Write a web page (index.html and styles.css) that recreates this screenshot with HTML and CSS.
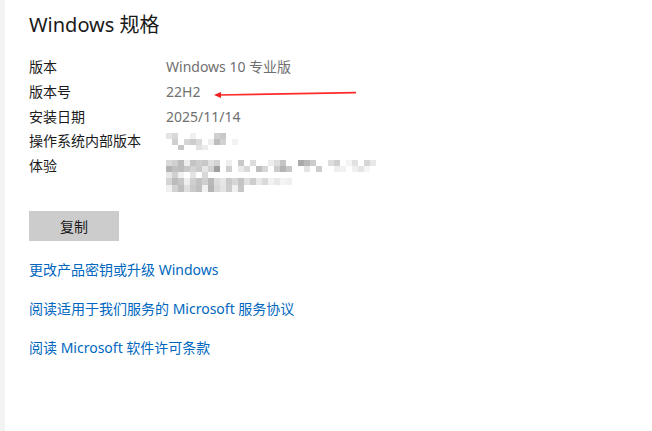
FILE: index.html
```html
<!DOCTYPE html>
<html lang="zh-CN">
<head>
  <meta charset="UTF-8">
  <title>Windows 规格</title>
  <link rel="stylesheet" href="styles.css">
</head>
<body>
  <div class="page">
    <div class="side"></div>
    <div class="content">
      <h1>Windows 规格</h1>

      <div class="specs">
        <div class="label">版本</div>
        <div class="value">Windows 10 专业版</div>
        <div class="label">版本号</div>
        <div class="value">22H2</div>
        <div class="label">安装日期</div>
        <div class="value">2025/11/14</div>
        <div class="label">操作系统内部版本</div>
        <div class="value">
          <!-- 打码处理 -->
          <svg class="mosaic" width="80" height="25" viewBox="0 0 80 25">
            <g transform="translate(0,4)">
              <rect x="0" y="0" width="6" height="6" fill="#e4e4e4"/>
              <rect x="6" y="0" width="6" height="6" fill="#d8d8d8"/>
              <rect x="24" y="0" width="6" height="6" fill="#f0f0f0"/>
              <rect x="48" y="0" width="6" height="6" fill="#d0d0d0"/>
              <rect x="54" y="0" width="6" height="6" fill="#c8c8c8"/>
              <rect x="6" y="6" width="6" height="6" fill="#cfcfcf"/>
              <rect x="18" y="6" width="6" height="6" fill="#d6d6d6"/>
              <rect x="24" y="6" width="6" height="6" fill="#cccccc"/>
              <rect x="30" y="6" width="6" height="6" fill="#dadada"/>
              <rect x="42" y="6" width="6" height="6" fill="#eeeeee"/>
              <rect x="48" y="6" width="6" height="6" fill="#bdbdbd"/>
              <rect x="54" y="6" width="6" height="6" fill="#d2d2d2"/>
              <rect x="66" y="6" width="6" height="6" fill="#f2f2f2"/>
              <rect x="12" y="12" width="6" height="5" fill="#c6c6c6"/>
              <rect x="30" y="12" width="6" height="5" fill="#e2e2e2"/>
              <rect x="36" y="12" width="6" height="5" fill="#ececec"/>
            </g>
          </svg>
        </div>
        <div class="label">体验</div>
        <div class="value tall">
          <svg class="mosaic" width="212" height="34" viewBox="0 0 212 34">
            <rect x="0" y="0" width="6" height="6" fill="#d9d9d9"/>
            <rect x="6" y="0" width="6" height="6" fill="#d0d0d0"/>
            <rect x="12" y="0" width="6" height="6" fill="#bcbcbc"/>
            <rect x="18" y="0" width="6" height="6" fill="#eeeeee"/>
            <rect x="24" y="0" width="6" height="6" fill="#c4c4c4"/>
            <rect x="30" y="0" width="6" height="6" fill="#cdcdcd"/>
            <rect x="36" y="0" width="6" height="6" fill="#c8c8c8"/>
            <rect x="42" y="0" width="6" height="6" fill="#e0e0e0"/>
            <rect x="48" y="0" width="6" height="6" fill="#d4d4d4"/>
            <rect x="60" y="0" width="6" height="6" fill="#efefef"/>
            <rect x="72" y="0" width="6" height="6" fill="#c9c9c9"/>
            <rect x="84" y="0" width="6" height="6" fill="#dcdcdc"/>
            <rect x="102" y="0" width="6" height="6" fill="#ececec"/>
            <rect x="108" y="0" width="6" height="6" fill="#dedede"/>
            <rect x="114" y="0" width="6" height="6" fill="#c5c5c5"/>
            <rect x="132" y="0" width="6" height="6" fill="#aaaaaa"/>
            <rect x="138" y="0" width="6" height="6" fill="#b8b8b8"/>
            <rect x="144" y="0" width="6" height="6" fill="#cccccc"/>
            <rect x="162" y="0" width="6" height="6" fill="#dddddd"/>
            <rect x="168" y="0" width="6" height="6" fill="#cfcfcf"/>
            <rect x="180" y="0" width="6" height="6" fill="#f4f4f4"/>
            <rect x="186" y="0" width="6" height="6" fill="#e2e2e2"/>
            <rect x="198" y="0" width="6" height="6" fill="#d6d6d6"/>
            <rect x="204" y="0" width="6" height="6" fill="#e8e8e8"/>

            <rect x="0" y="6" width="6" height="6" fill="#b2b2b2"/>
            <rect x="6" y="6" width="6" height="6" fill="#c0c0c0"/>
            <rect x="12" y="6" width="6" height="6" fill="#bdbdbd"/>
            <rect x="18" y="6" width="6" height="6" fill="#c8c8c8"/>
            <rect x="24" y="6" width="6" height="6" fill="#d3d3d3"/>
            <rect x="30" y="6" width="6" height="6" fill="#cacaca"/>
            <rect x="36" y="6" width="6" height="6" fill="#e6e6e6"/>
            <rect x="42" y="6" width="6" height="6" fill="#d1d1d1"/>
            <rect x="48" y="6" width="6" height="6" fill="#9f9f9f"/>
            <rect x="60" y="6" width="6" height="6" fill="#cfcfcf"/>
            <rect x="72" y="6" width="6" height="6" fill="#eaeaea"/>
            <rect x="78" y="6" width="6" height="6" fill="#d8d8d8"/>
            <rect x="90" y="6" width="6" height="6" fill="#bfbfbf"/>
            <rect x="96" y="6" width="6" height="6" fill="#d6d6d6"/>
            <rect x="108" y="6" width="6" height="6" fill="#cbcbcb"/>
            <rect x="114" y="6" width="6" height="6" fill="#b5b5b5"/>
            <rect x="120" y="6" width="6" height="6" fill="#c7c7c7"/>
            <rect x="138" y="6" width="6" height="6" fill="#e5e5e5"/>
            <rect x="150" y="6" width="6" height="6" fill="#cdcdcd"/>
            <rect x="168" y="6" width="6" height="6" fill="#eeeeee"/>
            <rect x="174" y="6" width="6" height="6" fill="#f2f2f2"/>
            <rect x="186" y="6" width="6" height="6" fill="#f0f0f0"/>
            <rect x="192" y="6" width="6" height="6" fill="#e4e4e4"/>
            <rect x="198" y="6" width="6" height="6" fill="#f6f6f6"/>

            <rect x="0" y="12" width="6" height="6" fill="#e8e8e8"/>
            <rect x="6" y="12" width="6" height="6" fill="#d0d0d0"/>
            <rect x="12" y="12" width="6" height="6" fill="#f0f0f0"/>
            <rect x="24" y="12" width="6" height="6" fill="#e4e4e4"/>
            <rect x="36" y="12" width="6" height="6" fill="#d8d8d8"/>

            <rect x="0" y="18" width="6" height="7" fill="#d4d4d4"/>
            <rect x="6" y="18" width="6" height="7" fill="#bcbcbc"/>
            <rect x="12" y="18" width="6" height="7" fill="#c6c6c6"/>
            <rect x="18" y="18" width="6" height="7" fill="#eeeeee"/>
            <rect x="24" y="18" width="6" height="7" fill="#cfcfcf"/>
            <rect x="30" y="18" width="6" height="7" fill="#c2c2c2"/>
            <rect x="36" y="18" width="6" height="7" fill="#d0d0d0"/>
            <rect x="42" y="18" width="6" height="7" fill="#b8b8b8"/>
            <rect x="48" y="18" width="6" height="7" fill="#dcdcdc"/>
            <rect x="54" y="18" width="6" height="7" fill="#e6e6e6"/>
            <rect x="60" y="18" width="6" height="7" fill="#c9c9c9"/>
            <rect x="66" y="18" width="6" height="7" fill="#d6d6d6"/>
            <rect x="72" y="18" width="6" height="7" fill="#c4c4c4"/>
            <rect x="78" y="18" width="6" height="7" fill="#e0e0e0"/>
            <rect x="84" y="18" width="6" height="7" fill="#cdcdcd"/>
            <rect x="90" y="18" width="6" height="7" fill="#eaeaea"/>
            <rect x="96" y="18" width="6" height="7" fill="#dadada"/>
            <rect x="102" y="18" width="6" height="7" fill="#f2f2f2"/>
            <rect x="108" y="18" width="6" height="7" fill="#e8e8e8"/>
            <rect x="114" y="18" width="6" height="7" fill="#f4f4f4"/>
            <rect x="120" y="18" width="6" height="7" fill="#f0f0f0"/>

            <rect x="0" y="25" width="6" height="7" fill="#f0f0f0"/>
            <rect x="6" y="25" width="6" height="7" fill="#d2d2d2"/>
            <rect x="12" y="25" width="6" height="7" fill="#bebebe"/>
            <rect x="18" y="25" width="6" height="7" fill="#dedede"/>
            <rect x="24" y="25" width="6" height="7" fill="#cacaca"/>
            <rect x="30" y="25" width="6" height="7" fill="#c0c0c0"/>
            <rect x="36" y="25" width="6" height="7" fill="#f2f2f2"/>
            <rect x="42" y="25" width="6" height="7" fill="#b4b4b4"/>
            <rect x="48" y="25" width="6" height="7" fill="#d8d8d8"/>
            <rect x="54" y="25" width="6" height="7" fill="#e4e4e4"/>
            <rect x="60" y="25" width="6" height="7" fill="#cccccc"/>
            <rect x="66" y="25" width="6" height="7" fill="#f0f0f0"/>
            <rect x="72" y="25" width="6" height="7" fill="#c6c6c6"/>
          </svg>
        </div>
      </div>

      <button class="copy-btn">复制</button>

      <div class="links">
        <a href="#">更改产品密钥或升级 Windows</a>
        <a href="#">阅读适用于我们服务的 Microsoft 服务协议</a>
        <a href="#">阅读 Microsoft 软件许可条款</a>
      </div>
    </div>

    <!-- 标注用的红色箭头 -->
    <svg class="arrow" width="150" height="10" viewBox="0 0 150 10">
      <line x1="5" y1="6" x2="142" y2="3.6" stroke="#ff2a2a" stroke-width="1.6"/>
      <polygon points="0,6 7,3 7,9" fill="#f02020"/>
    </svg>
  </div>
</body>
</html>
```

FILE: styles.css
```css
body {
  margin: 0;
  background: #fff;
  font-family: "Segoe UI", "Noto Sans", "Noto Sans CJK SC", sans-serif;
  color: #000;
}
.page {
  position: relative;
  display: flex;
  height: 431px;
  overflow: hidden;
}
.side {
  width: 5px;
  background: #f3f3f3;
  flex-shrink: 0;
}
.content {
  padding-left: 24px;
  padding-top: 11px;
}
h1 {
  margin: 0 0 16px;
  font-size: 20px;
  font-weight: 400;
  line-height: 28px;
  color: #1a1a1a;
}
.specs {
  display: grid;
  grid-template-columns: 137px auto;
  font-size: 14px;
  line-height: 24.75px;
}
.label {
  color: #1a1a1a;
}
.value {
  color: #707070;
  height: 24.75px;
}
.value.tall {
  height: 50px;
}
.mosaic {
  display: block;
}
.value.tall .mosaic {
  margin-top: 6px;
}
.copy-btn {
  display: block;
  width: 90px;
  height: 30px;
  margin-top: 7px;
  border: none;
  background: #cccccc;
  font-family: inherit;
  font-size: 14px;
  color: #1a1a1a;
  padding: 0;
}
.links {
  display: flex;
  flex-direction: column;
  gap: 14px;
  margin-top: 16px;
}
.links a {
  font-size: 14px;
  line-height: 25px;
  color: #0067c0;
  text-decoration: none;
}
.arrow {
  position: absolute;
  left: 214px;
  top: 89px;
}
```
